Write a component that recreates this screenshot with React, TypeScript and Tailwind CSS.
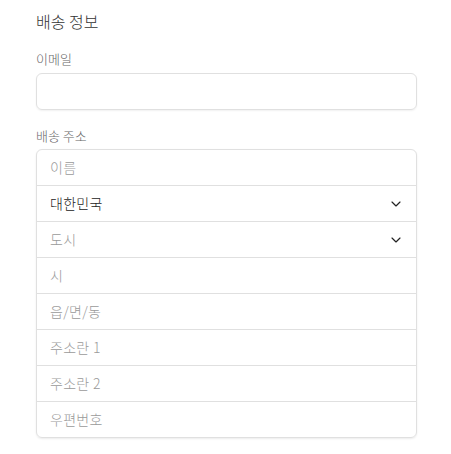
import { ChevronDown } from 'lucide-react';

const rows = [
  { text: '이름', placeholder: true },
  { text: '대한민국', placeholder: false, select: true },
  { text: '도시', placeholder: true, select: true },
  { text: '시', placeholder: true },
  { text: '읍/면/동', placeholder: true },
  { text: '주소란 1', placeholder: true },
  { text: '주소란 2', placeholder: true },
  { text: '우편번호', placeholder: true },
];

const App = () => {
  return (
    <div
      className="w-[451px] h-[454px] bg-white pl-9 pt-[10px] font-light"
      style={{ fontFamily: '"Noto Sans CJK KR", "Noto Sans", sans-serif' }}
    >
      <h2 className="text-[16px] leading-[22px] text-[#333]">배송 정보</h2>
      <p className="mt-[18px] text-[13px] leading-[18px] text-[#666]">이메일</p>
      <div className="mt-[5px] w-[381px] h-[37px] rounded-md border border-[#e0e0e0] shadow-[0_1px_2px_rgba(0,0,0,0.06)]" />
      <p className="mt-[17px] text-[13px] leading-[18px] text-[#666]">배송 주소</p>
      <div className="mt-[4px] w-[381px] rounded-md border border-[#e0e0e0] shadow-[0_1px_2px_rgba(0,0,0,0.08)] overflow-hidden">
        {rows.map((row, i) => (
          <div
            key={row.text}
            className={`flex items-center justify-between pl-[13px] pr-[12px] ${i > 0 ? 'h-[36px] border-t border-[#e0e0e0]' : 'h-[35px]'}`}
          >
            <span className={`text-[14px] tracking-[0.3px] ${row.placeholder ? 'text-[#9a9a9a]' : 'text-[#222]'}`}>{row.text}</span>
            {row.select && <ChevronDown className="w-[16px] h-[16px] text-[#222]" strokeWidth={1.75} />}
          </div>
        ))}
      </div>
    </div>
  );
};

export default App;
